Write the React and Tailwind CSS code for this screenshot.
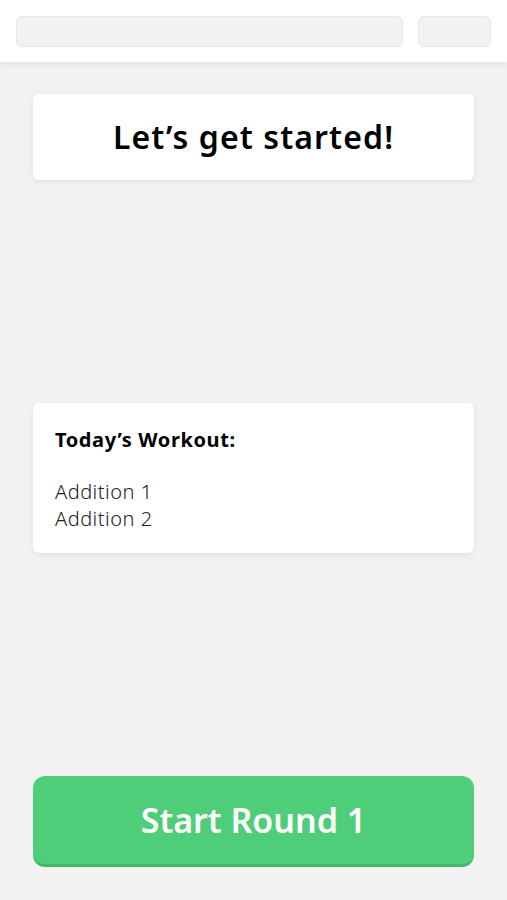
const App = () => {
  const workout = ["Addition 1", "Addition 2"];

  return (
    <div
      className="flex flex-col h-[900px] bg-[#f2f2f2] text-black"
      style={{ fontFamily: "'Noto Sans', Lato, sans-serif" }}
    >
      {/* top bar */}
      <div className="flex items-center gap-[15px] h-[62px] px-4 bg-white shadow-[0_2px_6px_rgba(0,0,0,0.08)] z-10">
        <div className="flex-1 h-[31px] rounded-md bg-[#f2f2f2] border border-[#e6e6e6]" />
        <div className="w-[73px] h-[31px] rounded-md bg-[#f2f2f2] border border-[#e6e6e6]" />
      </div>

      <div className="flex flex-1 flex-col justify-between px-[33px] pt-8 pb-[33px]">
        <div className="flex items-center justify-center h-[86px] rounded-md bg-white shadow-[0_2px_6px_rgba(0,0,0,0.08)]">
          <h1 className="text-[32px] font-semibold tracking-[1.1px]">Let’s get started!</h1>
        </div>

        <div className="flex flex-col h-[150px] px-[22px] pt-[24px] rounded-md bg-white shadow-[0_2px_6px_rgba(0,0,0,0.08)]">
          <h2 className="text-[20px] font-bold leading-[26px] tracking-[0.6px]">Today’s Workout:</h2>
          <div className="mt-[25px] text-[20px] font-light leading-[27px] tracking-[0.5px] text-[#222]">
            {workout.map((w) => (
              <p key={w}>{w}</p>
            ))}
          </div>
        </div>

        <button className="flex items-center justify-center h-[91px] rounded-xl bg-[#4fce7a] border-b-[3px] border-[#41b868] text-white text-[34px] font-semibold">
          Start Round 1
        </button>
      </div>
    </div>
  );
};

export default App;
